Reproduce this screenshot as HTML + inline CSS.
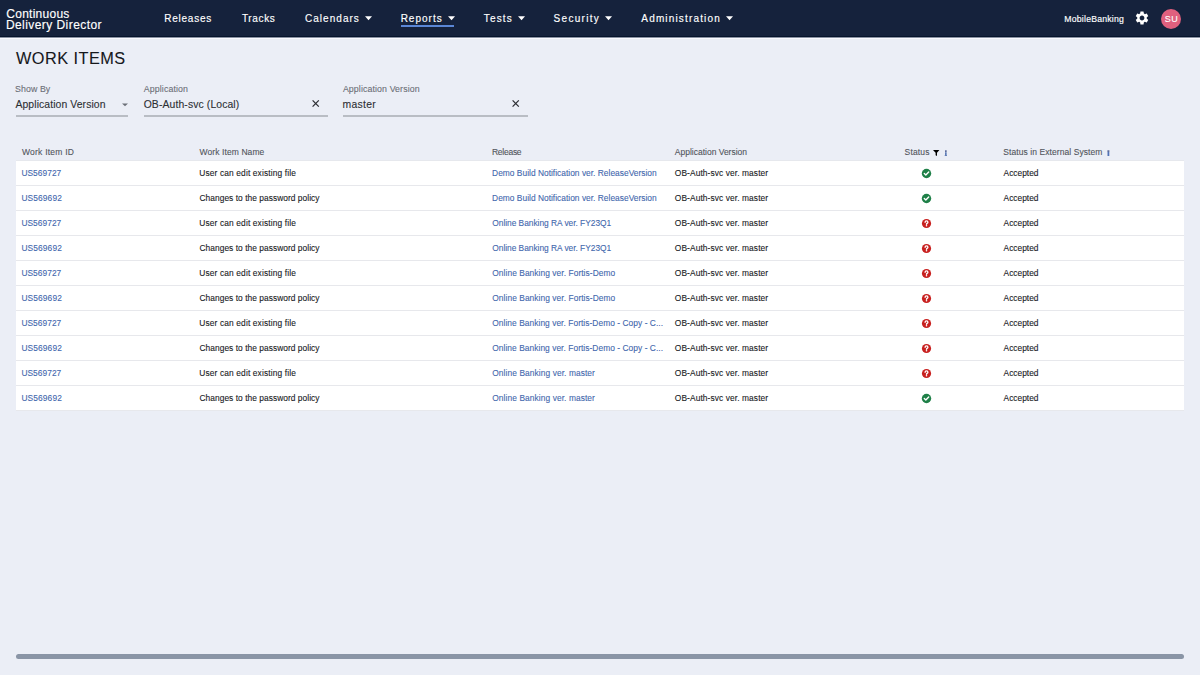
<!DOCTYPE html>
<html><head><meta charset="utf-8">
<style>
*{box-sizing:border-box;margin:0;padding:0}
html,body{width:1200px;height:675px;overflow:hidden;background:#ebeef6;font-family:"Liberation Sans",sans-serif;position:relative}
.t{position:absolute;line-height:20px;white-space:nowrap;font-family:"Liberation Sans",sans-serif;-webkit-text-stroke:0.1px currentColor}.w{-webkit-text-stroke:0.15px #fff}
.ic{position:absolute;display:block}
.hdr{position:absolute;left:0;top:0;width:1200px;height:37px;background:#15223c}
.hdr2{position:absolute;left:0;top:36px;width:1200px;height:1px;background:#06142c}
.hdr3{position:absolute;left:0;top:37px;width:1200px;height:1px;background:#8a92a3}.hdr4{position:absolute;left:0;top:38px;width:1200px;height:1px;background:#f9faff}
.ul{position:absolute;left:401px;top:25px;width:53.3px;height:2px;background:#5b87d6}
.avatar{position:absolute;left:1161.25px;top:8.75px;width:20px;height:20px;border-radius:50%;background:#e0607e}
.line{position:absolute;top:115px;height:2px;background:#b9bdc4}
.row{position:absolute;left:16px;width:1168px;height:25px;background:#fff;border-bottom:1px solid #e7e8ec}
.scroll{position:absolute;left:16px;top:654px;width:1168px;height:5px;border-radius:2.5px;background:#8a95a6}
</style></head><body>
<div class="hdr"></div><div class="hdr2"></div><div class="hdr3"></div><div class="hdr4"></div>
<div class="ul"></div>
<div class="avatar"></div>
<svg class="ic" style="left:364.7px;top:16px" width="7" height="5" viewBox="0 0 7 5"><path d="M0 0.3 H7 L3.5 4.3 Z" fill="#fff"/></svg><svg class="ic" style="left:448.0px;top:16px" width="7" height="5" viewBox="0 0 7 5"><path d="M0 0.3 H7 L3.5 4.3 Z" fill="#fff"/></svg><svg class="ic" style="left:518.3px;top:16px" width="7" height="5" viewBox="0 0 7 5"><path d="M0 0.3 H7 L3.5 4.3 Z" fill="#fff"/></svg><svg class="ic" style="left:605.0px;top:16px" width="7" height="5" viewBox="0 0 7 5"><path d="M0 0.3 H7 L3.5 4.3 Z" fill="#fff"/></svg><svg class="ic" style="left:726.0px;top:16px" width="7" height="5" viewBox="0 0 7 5"><path d="M0 0.3 H7 L3.5 4.3 Z" fill="#fff"/></svg>
<svg class="ic" style="left:1133.5px;top:10px" width="16" height="16" viewBox="0 0 24 24"><path fill="#fff" d="M19.14 12.94c.04-.3.06-.61.06-.94 0-.32-.02-.64-.07-.94l2.03-1.58a.49.49 0 0 0 .12-.61l-1.92-3.32a.49.49 0 0 0-.59-.22l-2.39.96c-.5-.38-1.03-.7-1.62-.94l-.36-2.54a.48.48 0 0 0-.48-.41h-3.84c-.24 0-.43.17-.47.41l-.36 2.54c-.59.24-1.13.57-1.62.94l-2.39-.96a.48.48 0 0 0-.59.22L2.74 8.87c-.12.21-.08.47.12.61l2.03 1.58c-.05.3-.09.63-.09.94s.02.64.07.94l-2.03 1.58a.49.49 0 0 0-.12.61l1.92 3.32c.12.22.37.29.59.22l2.39-.96c.5.38 1.03.7 1.62.94l.36 2.54c.05.24.24.41.48.41h3.84c.24 0 .44-.17.47-.41l.36-2.54c.59-.24 1.13-.56 1.62-.94l2.39.96c.22.08.47 0 .59-.22l1.92-3.32c.12-.22.07-.47-.12-.61l-2.01-1.58zM12 15.6c-1.98 0-3.6-1.62-3.6-3.6s1.62-3.6 3.6-3.6 3.6 1.62 3.6 3.6-1.62 3.6-3.6 3.6z"/></svg>
<div class="line" style="left:16px;width:112px"></div>
<div class="line" style="left:144px;width:184px"></div>
<div class="line" style="left:343px;width:184.5px"></div>
<svg class="ic" style="left:122px;top:102.5px" width="6" height="4" viewBox="0 0 6 4"><path d="M0 0.5 H6 L3 3.3 Z" fill="#6b6f77"/></svg>
<svg class="ic" style="left:312px;top:100px" width="8" height="7" viewBox="0 0 8 7"><path d="M0.6 0.4 L6.8 6.6 M6.8 0.4 L0.6 6.6" stroke="#2c2e33" stroke-width="1.2"/></svg>
<svg class="ic" style="left:511.5px;top:100px" width="8" height="7" viewBox="0 0 8 7"><path d="M0.6 0.4 L6.8 6.6 M6.8 0.4 L0.6 6.6" stroke="#2c2e33" stroke-width="1.2"/></svg>
<svg class="ic" style="left:933px;top:150px" width="7" height="6" viewBox="0 0 7 6"><path d="M0 0 H6.4 L4 2.8 V6 L2.6 5.2 V2.8 Z" fill="#000"/></svg>
<svg class="ic" style="left:944px;top:150px" width="4" height="7" viewBox="0 0 4 7"><rect x="1" y="0.4" width="1.7" height="1.4" fill="#3d4f86"/><rect x="1.1" y="2.2" width="1.5" height="3.2" fill="#4f6fb0"/><rect x="0.7" y="5.2" width="2.3" height="0.8" fill="#4f6fb0"/></svg>
<svg class="ic" style="left:1106.5px;top:150px" width="4" height="7" viewBox="0 0 4 7"><rect x="0.4" y="0.4" width="2" height="1.4" fill="#3d4f86"/><rect x="0.5" y="2" width="1.8" height="4" fill="#5272b5"/></svg>
<div class="ic" style="left:16px;top:160px;width:1168px;height:1px;background:#e6e8ed"></div>
<div class="row" style="top:161px"></div><div class="row" style="top:186px"></div><div class="row" style="top:211px"></div><div class="row" style="top:236px"></div><div class="row" style="top:261px"></div><div class="row" style="top:286px"></div><div class="row" style="top:311px"></div><div class="row" style="top:336px"></div><div class="row" style="top:361px"></div><div class="row" style="top:386px"></div>
<svg class="ic" style="left:921px;top:167.75px" width="11" height="11" viewBox="0 0 11 11"><circle cx="5.5" cy="5.5" r="4.7" fill="#1f8048"/><path d="M3.3 5.6 L4.8 7 L7.7 4.1" stroke="#fff" stroke-width="1.4" fill="none" stroke-linecap="round" stroke-linejoin="round"/></svg><svg class="ic" style="left:921px;top:192.75px" width="11" height="11" viewBox="0 0 11 11"><circle cx="5.5" cy="5.5" r="4.7" fill="#1f8048"/><path d="M3.3 5.6 L4.8 7 L7.7 4.1" stroke="#fff" stroke-width="1.4" fill="none" stroke-linecap="round" stroke-linejoin="round"/></svg><svg class="ic" style="left:921px;top:217.75px" width="11" height="11" viewBox="0 0 11 11"><circle cx="5.5" cy="5.5" r="4.6" fill="#c8201f"/><path d="M4.1 4.3 Q4.1 2.9 5.5 2.9 Q6.9 2.9 6.9 4.2 Q6.9 4.9 6.1 5.3 Q5.5 5.6 5.5 6.2" stroke="#fff" stroke-width="1.35" fill="none" stroke-linecap="round"/><circle cx="5.5" cy="7.75" r="0.8" fill="#fff"/></svg><svg class="ic" style="left:921px;top:242.75px" width="11" height="11" viewBox="0 0 11 11"><circle cx="5.5" cy="5.5" r="4.6" fill="#c8201f"/><path d="M4.1 4.3 Q4.1 2.9 5.5 2.9 Q6.9 2.9 6.9 4.2 Q6.9 4.9 6.1 5.3 Q5.5 5.6 5.5 6.2" stroke="#fff" stroke-width="1.35" fill="none" stroke-linecap="round"/><circle cx="5.5" cy="7.75" r="0.8" fill="#fff"/></svg><svg class="ic" style="left:921px;top:267.75px" width="11" height="11" viewBox="0 0 11 11"><circle cx="5.5" cy="5.5" r="4.6" fill="#c8201f"/><path d="M4.1 4.3 Q4.1 2.9 5.5 2.9 Q6.9 2.9 6.9 4.2 Q6.9 4.9 6.1 5.3 Q5.5 5.6 5.5 6.2" stroke="#fff" stroke-width="1.35" fill="none" stroke-linecap="round"/><circle cx="5.5" cy="7.75" r="0.8" fill="#fff"/></svg><svg class="ic" style="left:921px;top:292.75px" width="11" height="11" viewBox="0 0 11 11"><circle cx="5.5" cy="5.5" r="4.6" fill="#c8201f"/><path d="M4.1 4.3 Q4.1 2.9 5.5 2.9 Q6.9 2.9 6.9 4.2 Q6.9 4.9 6.1 5.3 Q5.5 5.6 5.5 6.2" stroke="#fff" stroke-width="1.35" fill="none" stroke-linecap="round"/><circle cx="5.5" cy="7.75" r="0.8" fill="#fff"/></svg><svg class="ic" style="left:921px;top:317.75px" width="11" height="11" viewBox="0 0 11 11"><circle cx="5.5" cy="5.5" r="4.6" fill="#c8201f"/><path d="M4.1 4.3 Q4.1 2.9 5.5 2.9 Q6.9 2.9 6.9 4.2 Q6.9 4.9 6.1 5.3 Q5.5 5.6 5.5 6.2" stroke="#fff" stroke-width="1.35" fill="none" stroke-linecap="round"/><circle cx="5.5" cy="7.75" r="0.8" fill="#fff"/></svg><svg class="ic" style="left:921px;top:342.75px" width="11" height="11" viewBox="0 0 11 11"><circle cx="5.5" cy="5.5" r="4.6" fill="#c8201f"/><path d="M4.1 4.3 Q4.1 2.9 5.5 2.9 Q6.9 2.9 6.9 4.2 Q6.9 4.9 6.1 5.3 Q5.5 5.6 5.5 6.2" stroke="#fff" stroke-width="1.35" fill="none" stroke-linecap="round"/><circle cx="5.5" cy="7.75" r="0.8" fill="#fff"/></svg><svg class="ic" style="left:921px;top:367.75px" width="11" height="11" viewBox="0 0 11 11"><circle cx="5.5" cy="5.5" r="4.6" fill="#c8201f"/><path d="M4.1 4.3 Q4.1 2.9 5.5 2.9 Q6.9 2.9 6.9 4.2 Q6.9 4.9 6.1 5.3 Q5.5 5.6 5.5 6.2" stroke="#fff" stroke-width="1.35" fill="none" stroke-linecap="round"/><circle cx="5.5" cy="7.75" r="0.8" fill="#fff"/></svg><svg class="ic" style="left:921px;top:392.75px" width="11" height="11" viewBox="0 0 11 11"><circle cx="5.5" cy="5.5" r="4.7" fill="#1f8048"/><path d="M3.3 5.6 L4.8 7 L7.7 4.1" stroke="#fff" stroke-width="1.4" fill="none" stroke-linecap="round" stroke-linejoin="round"/></svg>
<div class="t w" style="left:6.34px;top:3.75px;font-size:12px;letter-spacing:0.256px;color:#ffffff">Continuous</div><div class="t w" style="left:5.88px;top:14.75px;font-size:12px;letter-spacing:0.438px;color:#ffffff">Delivery Director</div><div class="t w" style="left:164.25px;top:8.50px;font-size:10px;letter-spacing:0.764px;color:#ffffff">Releases</div><div class="t w" style="left:241.94px;top:8.50px;font-size:10px;letter-spacing:0.652px;color:#ffffff">Tracks</div><div class="t w" style="left:305.02px;top:8.50px;font-size:10px;letter-spacing:1.031px;color:#ffffff">Calendars</div><div class="t w" style="left:400.65px;top:8.50px;font-size:10px;letter-spacing:1.012px;color:#ffffff">Reports</div><div class="t w" style="left:483.84px;top:8.50px;font-size:10px;letter-spacing:1.122px;color:#ffffff">Tests</div><div class="t w" style="left:553.61px;top:8.50px;font-size:10px;letter-spacing:1.286px;color:#ffffff">Security</div><div class="t w" style="left:641.35px;top:8.50px;font-size:10px;letter-spacing:1.156px;color:#ffffff">Administration</div><div class="t w" style="left:1064.28px;top:9.10px;font-size:8.7px;letter-spacing:0.221px;color:#ffffff">MobileBanking</div><div class="t" style="left:1164.87px;top:8.90px;font-size:9px;letter-spacing:0.375px;color:#ffffff">SU</div><div class="t" style="left:16.01px;top:47.80px;font-size:16.3px;letter-spacing:0.473px;color:#16181c">WORK ITEMS</div><div class="t" style="left:15.07px;top:79.00px;font-size:8.8px;letter-spacing:0.076px;color:#6b6f77">Show By</div><div class="t" style="left:143.79px;top:78.50px;font-size:8.8px;letter-spacing:0.114px;color:#6b6f77">Application</div><div class="t" style="left:342.89px;top:78.50px;font-size:8.8px;letter-spacing:0.106px;color:#6b6f77">Application Version</div><div class="t" style="left:15.47px;top:95.30px;font-size:10.4px;letter-spacing:0.09px;color:#2c2e33">Application Version</div><div class="t" style="left:143.66px;top:94.70px;font-size:10.4px;letter-spacing:0.114px;color:#2c2e33">OB-Auth-svc (Local)</div><div class="t" style="left:342.58px;top:94.70px;font-size:10.4px;letter-spacing:0.294px;color:#2c2e33">master</div><div class="t" style="left:21.92px;top:142.00px;font-size:8.5px;letter-spacing:0.241px;color:#51555c">Work Item ID</div><div class="t" style="left:199.62px;top:142.00px;font-size:8.5px;letter-spacing:0.084px;color:#51555c">Work Item Name</div><div class="t" style="left:491.98px;top:142.00px;font-size:8.5px;letter-spacing:-0.26px;color:#51555c">Release</div><div class="t" style="left:674.87px;top:142.00px;font-size:8.5px;letter-spacing:-0.008px;color:#51555c">Application Version</div><div class="t" style="left:904.58px;top:142.00px;font-size:8.5px;letter-spacing:0.166px;color:#51555c">Status</div><div class="t" style="left:1003.28px;top:142.00px;font-size:8.5px;letter-spacing:0.076px;color:#51555c">Status in External System</div><div class="t" style="left:21.41px;top:162.80px;font-size:8.4px;letter-spacing:0.038px;color:#3f67ad">US569727</div><div class="t" style="left:199.31px;top:162.80px;font-size:8.4px;letter-spacing:0.132px;color:#17191d">User can edit existing file</div><div class="t" style="left:492.11px;top:162.80px;font-size:8.4px;letter-spacing:0.017px;color:#3f67ad">Demo Build Notification ver. ReleaseVersion</div><div class="t" style="left:674.77px;top:162.80px;font-size:8.4px;letter-spacing:0.097px;color:#17191d">OB-Auth-svc ver. master</div><div class="t" style="left:1003.56px;top:162.80px;font-size:8.4px;letter-spacing:0.003px;color:#17191d">Accepted</div><div class="t" style="left:21.41px;top:187.80px;font-size:8.4px;letter-spacing:0.12px;color:#3f67ad">US569692</div><div class="t" style="left:199.47px;top:187.80px;font-size:8.4px;letter-spacing:0.046px;color:#17191d">Changes to the password policy</div><div class="t" style="left:492.11px;top:187.80px;font-size:8.4px;letter-spacing:0.017px;color:#3f67ad">Demo Build Notification ver. ReleaseVersion</div><div class="t" style="left:674.77px;top:187.80px;font-size:8.4px;letter-spacing:0.097px;color:#17191d">OB-Auth-svc ver. master</div><div class="t" style="left:1003.56px;top:187.80px;font-size:8.4px;letter-spacing:0.003px;color:#17191d">Accepted</div><div class="t" style="left:21.41px;top:212.80px;font-size:8.4px;letter-spacing:0.038px;color:#3f67ad">US569727</div><div class="t" style="left:199.31px;top:212.80px;font-size:8.4px;letter-spacing:0.132px;color:#17191d">User can edit existing file</div><div class="t" style="left:492.27px;top:212.80px;font-size:8.4px;letter-spacing:-0.026px;color:#3f67ad">Online Banking RA ver. FY23Q1</div><div class="t" style="left:674.77px;top:212.80px;font-size:8.4px;letter-spacing:0.097px;color:#17191d">OB-Auth-svc ver. master</div><div class="t" style="left:1003.56px;top:212.80px;font-size:8.4px;letter-spacing:0.003px;color:#17191d">Accepted</div><div class="t" style="left:21.41px;top:237.80px;font-size:8.4px;letter-spacing:0.12px;color:#3f67ad">US569692</div><div class="t" style="left:199.47px;top:237.80px;font-size:8.4px;letter-spacing:0.046px;color:#17191d">Changes to the password policy</div><div class="t" style="left:492.27px;top:237.80px;font-size:8.4px;letter-spacing:-0.026px;color:#3f67ad">Online Banking RA ver. FY23Q1</div><div class="t" style="left:674.77px;top:237.80px;font-size:8.4px;letter-spacing:0.097px;color:#17191d">OB-Auth-svc ver. master</div><div class="t" style="left:1003.56px;top:237.80px;font-size:8.4px;letter-spacing:0.003px;color:#17191d">Accepted</div><div class="t" style="left:21.41px;top:262.80px;font-size:8.4px;letter-spacing:0.038px;color:#3f67ad">US569727</div><div class="t" style="left:199.31px;top:262.80px;font-size:8.4px;letter-spacing:0.132px;color:#17191d">User can edit existing file</div><div class="t" style="left:492.27px;top:262.80px;font-size:8.4px;letter-spacing:0.063px;color:#3f67ad">Online Banking ver. Fortis-Demo</div><div class="t" style="left:674.77px;top:262.80px;font-size:8.4px;letter-spacing:0.097px;color:#17191d">OB-Auth-svc ver. master</div><div class="t" style="left:1003.56px;top:262.80px;font-size:8.4px;letter-spacing:0.003px;color:#17191d">Accepted</div><div class="t" style="left:21.41px;top:287.80px;font-size:8.4px;letter-spacing:0.12px;color:#3f67ad">US569692</div><div class="t" style="left:199.47px;top:287.80px;font-size:8.4px;letter-spacing:0.046px;color:#17191d">Changes to the password policy</div><div class="t" style="left:492.27px;top:287.80px;font-size:8.4px;letter-spacing:0.063px;color:#3f67ad">Online Banking ver. Fortis-Demo</div><div class="t" style="left:674.77px;top:287.80px;font-size:8.4px;letter-spacing:0.097px;color:#17191d">OB-Auth-svc ver. master</div><div class="t" style="left:1003.56px;top:287.80px;font-size:8.4px;letter-spacing:0.003px;color:#17191d">Accepted</div><div class="t" style="left:21.41px;top:312.80px;font-size:8.4px;letter-spacing:0.038px;color:#3f67ad">US569727</div><div class="t" style="left:199.31px;top:312.80px;font-size:8.4px;letter-spacing:0.132px;color:#17191d">User can edit existing file</div><div class="t" style="left:492.27px;top:312.80px;font-size:8.4px;letter-spacing:0.052px;color:#3f67ad">Online Banking ver. Fortis-Demo - Copy - C...</div><div class="t" style="left:674.77px;top:312.80px;font-size:8.4px;letter-spacing:0.097px;color:#17191d">OB-Auth-svc ver. master</div><div class="t" style="left:1003.56px;top:312.80px;font-size:8.4px;letter-spacing:0.003px;color:#17191d">Accepted</div><div class="t" style="left:21.41px;top:337.80px;font-size:8.4px;letter-spacing:0.12px;color:#3f67ad">US569692</div><div class="t" style="left:199.47px;top:337.80px;font-size:8.4px;letter-spacing:0.046px;color:#17191d">Changes to the password policy</div><div class="t" style="left:492.27px;top:337.80px;font-size:8.4px;letter-spacing:0.052px;color:#3f67ad">Online Banking ver. Fortis-Demo - Copy - C...</div><div class="t" style="left:674.77px;top:337.80px;font-size:8.4px;letter-spacing:0.097px;color:#17191d">OB-Auth-svc ver. master</div><div class="t" style="left:1003.56px;top:337.80px;font-size:8.4px;letter-spacing:0.003px;color:#17191d">Accepted</div><div class="t" style="left:21.41px;top:362.80px;font-size:8.4px;letter-spacing:0.038px;color:#3f67ad">US569727</div><div class="t" style="left:199.31px;top:362.80px;font-size:8.4px;letter-spacing:0.132px;color:#17191d">User can edit existing file</div><div class="t" style="left:492.27px;top:362.80px;font-size:8.4px;letter-spacing:0.083px;color:#3f67ad">Online Banking ver. master</div><div class="t" style="left:674.77px;top:362.80px;font-size:8.4px;letter-spacing:0.097px;color:#17191d">OB-Auth-svc ver. master</div><div class="t" style="left:1003.56px;top:362.80px;font-size:8.4px;letter-spacing:0.003px;color:#17191d">Accepted</div><div class="t" style="left:21.41px;top:387.80px;font-size:8.4px;letter-spacing:0.12px;color:#3f67ad">US569692</div><div class="t" style="left:199.47px;top:387.80px;font-size:8.4px;letter-spacing:0.046px;color:#17191d">Changes to the password policy</div><div class="t" style="left:492.27px;top:387.80px;font-size:8.4px;letter-spacing:0.083px;color:#3f67ad">Online Banking ver. master</div><div class="t" style="left:674.77px;top:387.80px;font-size:8.4px;letter-spacing:0.097px;color:#17191d">OB-Auth-svc ver. master</div><div class="t" style="left:1003.56px;top:387.80px;font-size:8.4px;letter-spacing:0.003px;color:#17191d">Accepted</div>
<div class="scroll"></div>
</body></html>
